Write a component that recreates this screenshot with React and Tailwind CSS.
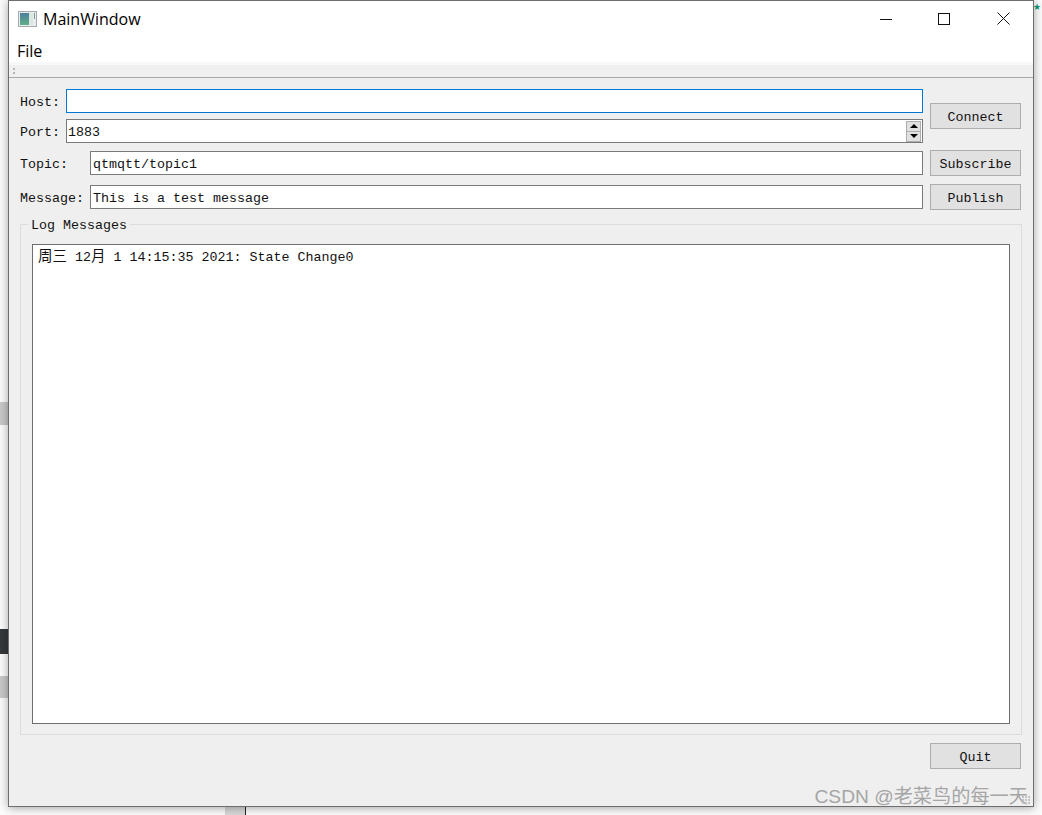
const mono = "font-['Liberation_Mono','Noto_Sans_CJK_SC',monospace] text-[13.33px] text-[#111]";

function WindowIcon() {
  return (
    <svg width="19" height="16" viewBox="0 0 19 16" className="shrink-0">
      <defs>
        <linearGradient id="pane" x1="0" y1="0" x2="0" y2="1">
          <stop offset="0" stopColor="#4f7f9c" />
          <stop offset="1" stopColor="#5fb088" />
        </linearGradient>
      </defs>
      <rect x="0.5" y="0.5" width="18" height="15" fill="#e8eef0" stroke="#a5a9ad" />
      <rect x="2" y="2" width="9" height="12" fill="url(#pane)" />
      <rect x="11" y="2" width="4" height="12" fill="#d9e8e0" />
      <rect x="16" y="2" width="1" height="6" fill="#7d9a94" />
    </svg>
  );
}

function TitleBar() {
  return (
    <div className="flex items-center h-[35px] bg-white pl-[9px]">
      <WindowIcon />
      <span className="ml-[6px] font-['Open_Sans',sans-serif] text-[16px] text-black">MainWindow</span>
      <div className="ml-auto flex items-center">
        <svg width="12" height="12" viewBox="0 0 12 12" className="mr-[46px]">
          <path d="M0 6.5H12" stroke="#111" strokeWidth="1" />
        </svg>
        <svg width="12" height="12" viewBox="0 0 12 12" className="mr-[47px]">
          <rect x="0.5" y="0.5" width="11" height="11" fill="none" stroke="#111" strokeWidth="1" />
        </svg>
        <svg width="13" height="13" viewBox="0 0 13 13" className="mr-[23px]">
          <path d="M0.5 0.5L12.5 12.5M12.5 0.5L0.5 12.5" stroke="#111" strokeWidth="1" />
        </svg>
      </div>
    </div>
  );
}

function Field({ value = "", focused = false, tight = false, children }) {
  return (
    <div className={`flex-1 flex items-center h-[24px] bg-white border ${tight ? "pl-[1px]" : "pl-[2px]"} ${focused ? "border-[#0078d7]" : "border-[#7a7a7a]"} ${mono}`}>
      <span className="flex-1 pt-[4px] whitespace-pre">{value}</span>
      {children}
    </div>
  );
}

function Button({ label }) {
  return (
    <div className={`flex items-center justify-center w-[91px] h-[26px] pt-[4px] bg-[#e1e1e1] border border-[#adadad] ${mono}`}>
      {label}
    </div>
  );
}

function Spinner() {
  return (
    <div className="flex flex-col w-[15px] h-[21px] mr-[1px]">
      <div className="flex-1 flex items-center justify-center border border-[#adadad] bg-[#e1e1e1]">
        <svg width="8" height="4" viewBox="0 0 8 4"><path d="M4 0L8 4H0Z" fill="#000" /></svg>
      </div>
      <div className="flex-1 flex items-center justify-center border border-t-0 border-[#adadad] bg-[#e1e1e1]">
        <svg width="8" height="4" viewBox="0 0 8 4"><path d="M0 0H8L4 4Z" fill="#000" /></svg>
      </div>
    </div>
  );
}

export default function App() {
  return (
    <div className="relative w-[1042px] h-[815px] overflow-hidden bg-[#fbfbfb]">
      {/* bits of the desktop behind the window */}
      <div className="absolute left-0 top-[402px] w-[8px] h-[23px] bg-[#c8c8c8]" />
      <div className="absolute left-0 top-[629px] w-[8px] h-[25px] bg-[#36393b]" />
      <div className="absolute left-0 top-[676px] w-[8px] h-[22px] bg-[#c8c8c8]" />
      <div className="absolute left-[225px] top-[807px] w-[20px] h-[8px] bg-[#d8d8d8]" />
      <div className="absolute left-[245px] top-[807px] w-[1px] h-[8px] bg-[#222]" />
      <div className="absolute left-[1033px] top-[2px] text-[9px] leading-[9px] text-[#0a9a78]">★</div>

      <div className="relative flex flex-col ml-[8px] w-[1026px] h-[807px] border border-[#6e6e6e] bg-[#efefef] shadow-[0_1px_9px_rgba(0,0,0,0.35)]">
        <TitleBar />
        <div className="flex items-center h-[26px] pt-[3px] bg-white pl-[8px] font-['Open_Sans',sans-serif] text-[16px] text-black">File</div>
        <div className="h-[3px] bg-[#f8f8f8]" />
        <div className="flex items-center h-[13px] bg-[#f0f0f0] border-b border-[#a9a9a9] pl-[4px]">
          <div className="flex flex-col gap-[2px]">
            <div className="w-[2px] h-[2px] bg-[#b5b5b5]" />
            <div className="w-[2px] h-[2px] bg-[#b5b5b5]" />
          </div>
        </div>

        <div className="flex-1 flex flex-col pt-[11px] pl-[11px] pr-[12px]">
          <div className="flex">
            <div className="flex-1 flex flex-col gap-[6px]">
              <div className="flex items-center">
                <span className={`w-[46px] pt-[4px] ${mono}`}>Host:</span>
                <Field focused />
              </div>
              <div className="flex items-center">
                <span className={`w-[46px] pt-[4px] ${mono}`}>Port:</span>
                <Field value="1883" tight><Spinner /></Field>
              </div>
            </div>
            <div className="ml-[7px] mt-[14px]"><Button label="Connect" /></div>
          </div>

          <div className="flex items-center mt-[7px]">
            <span className={`w-[70px] pt-[4px] ${mono}`}>Topic:</span>
            <Field value="qtmqtt/topic1" />
            <div className="ml-[7px]"><Button label="Subscribe" /></div>
          </div>

          <div className="flex items-center mt-[8px]">
            <span className={`w-[70px] pt-[4px] ${mono}`}>Message:</span>
            <Field value="This is a test message" />
            <div className="ml-[7px]"><Button label="Publish" /></div>
          </div>

          <div className="relative mt-[14px] mr-[-1px] h-[511px] border border-[#dcdcdc] pt-[19px] px-[11px] pb-[10px]">
            <span className={`absolute left-[7px] top-[-7px] px-[3px] leading-[15px] bg-[#efefef] ${mono}`}>Log Messages</span>
            <div className={`h-full bg-white border border-[#6e6e6e] pl-[5px] pt-[2px] ${mono}`}>
              <span className="text-[14.5px]">周三</span> 12<span className="text-[14.5px]">月</span> 1 14:15:35 2021: State Change0
            </div>
          </div>

          <div className="flex justify-end mt-[8px]"><Button label="Quit" /></div>
        </div>

        {/* CSDN watermark */}
        <div className="absolute right-[5px] bottom-[-4px] font-['Liberation_Sans','Noto_Sans_CJK_SC',sans-serif] text-[19.2px] leading-[26px] text-[#a5a5a5] whitespace-nowrap">
          CSDN @老菜鸟的每一天
        </div>
        <div className="absolute right-[3px] bottom-[2px] grid grid-cols-3 gap-[1px]">
          {[0, 1, 2, 3, 4, 5, 6, 7, 8].map((i) => (
            <div key={i} className="w-[2px] h-[2px] bg-[#c4c4c4]" />
          ))}
        </div>
      </div>
    </div>
  );
}
